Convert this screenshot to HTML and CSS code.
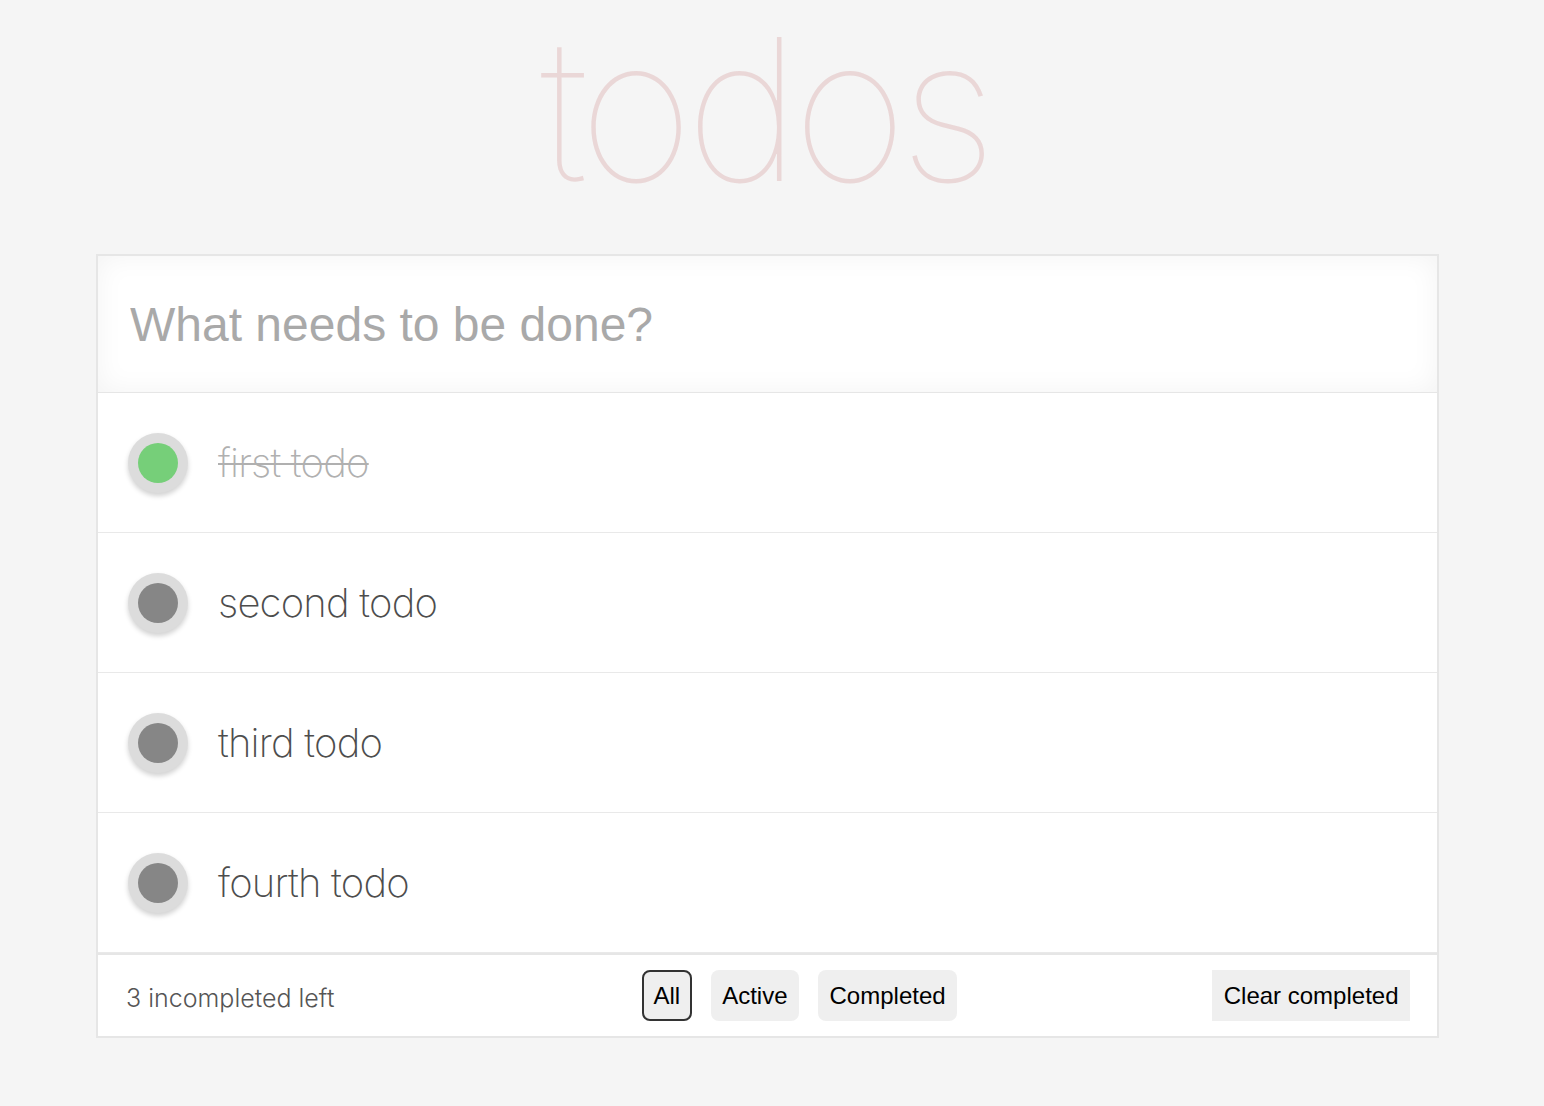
FILE: index.html
```html
<!DOCTYPE html>
<html lang="en">
<head>
<meta charset="utf-8">
<title>todos</title>
<link rel="stylesheet" href="styles.css">
</head>
<body>
<div class="app">
  <header class="header">
    <h1 class="title">todos</h1>
  </header>
  <section class="todoapp">
    <div class="new-todo">
      <input class="new-todo-input" type="text" placeholder="What needs to be done?">
    </div>
    <ul class="todo-list">
      <li class="todo done">
        <span class="toggle"><span class="toggle-dot"></span></span>
        <span class="todo-label">first todo</span>
      </li>
      <li class="todo">
        <span class="toggle"><span class="toggle-dot"></span></span>
        <span class="todo-label">second todo</span>
      </li>
      <li class="todo">
        <span class="toggle"><span class="toggle-dot"></span></span>
        <span class="todo-label">third todo</span>
      </li>
      <li class="todo">
        <span class="toggle"><span class="toggle-dot"></span></span>
        <span class="todo-label">fourth todo</span>
      </li>
    </ul>
    <footer class="footer">
      <span class="count">3 incompleted left</span>
      <div class="filters">
        <button class="filter selected">All</button>
        <button class="filter">Active</button>
        <button class="filter">Completed</button>
      </div>
      <button class="clear">Clear completed</button>
    </footer>
  </section>
</div>
</body>
</html>
```
FILE: styles.css
```css
* { box-sizing: border-box; }

html, body {
  margin: 0;
  padding: 0;
  background: #f5f5f5;
}

body {
  font-family: Inter, "Liberation Sans", sans-serif;
}

.app {
  width: 1343px;
  margin-left: 96px;
}

.header {
  height: 254px;
  padding-top: 4px;
}

.title {
  margin: 0;
  text-align: center;
  font-family: Inter, "Liberation Sans", sans-serif;
  font-weight: 100;
  font-size: 198px;
  line-height: 210px;
  letter-spacing: -8px;
  color: rgba(175, 47, 47, 0.15);
  padding-right: 6px;
}

.todoapp {
  border: 2px solid #e6e6e6;
  background: #fff;
}

.new-todo {
  height: 137px;
  border-bottom: 1px solid #e6e6e6;
  box-shadow: inset 0 0 28px rgba(0, 0, 0, 0.05);
  display: flex;
  align-items: center;
  padding-left: 32px;
}

.new-todo-input {
  border: 0;
  outline: 0;
  background: transparent;
  width: 100%;
  font-family: "Liberation Sans", Arial, sans-serif;
  font-size: 48px;
  color: #333;
  padding: 0;
  margin-top: 0;
}

.new-todo-input::placeholder {
  color: #a9a9a9;
}

.todo-list {
  list-style: none;
  margin: 0;
  padding: 0;
}

.todo {
  height: 140px;
  border-bottom: 1px solid #e9e9e9;
  display: flex;
  align-items: center;
  padding-left: 30px;
}

.toggle {
  width: 60px;
  height: 60px;
  border-radius: 50%;
  background: #dcdcdc;
  box-shadow: 0 3px 5px rgba(0, 0, 0, 0.18);
  display: flex;
  align-items: center;
  justify-content: center;
  flex: none;
}

.toggle-dot {
  width: 40px;
  height: 40px;
  border-radius: 50%;
  background: #868686;
}

.done .toggle-dot {
  background: #76cf79;
}

.todo-label {
  margin-left: 30px;
  font-size: 40px;
  font-weight: 250;
  color: #4d4d4d;
  letter-spacing: -0.8px;
  margin-top: 0;
}

.done .todo-label {
  color: #b0b0b0;
  text-decoration: line-through;
  text-decoration-thickness: 2px;
}

.footer {
  border-top: 2px solid #e6e6e6;
  height: 83px;
  display: flex;
  align-items: center;
  padding: 0 27px 0 28px;
}

.count {
  flex: 0 0 516px;
  font-size: 25px;
  font-weight: 300;
  color: #555;
  margin-top: 4px;
}

.filters {
  display: flex;
  gap: 19px;
}

.filter,
.clear {
  font-family: "Liberation Sans", Arial, sans-serif;
  font-size: 24px;
  color: #000;
  background: #efefef;
  border: 2px solid transparent;
  border-radius: 8px;
  height: 51px;
  padding: 0 9.5px;
  margin: 0;
}

.filter.selected {
  border-color: #333;
}

.clear {
  margin-left: auto;
  border-radius: 0;
}
```
